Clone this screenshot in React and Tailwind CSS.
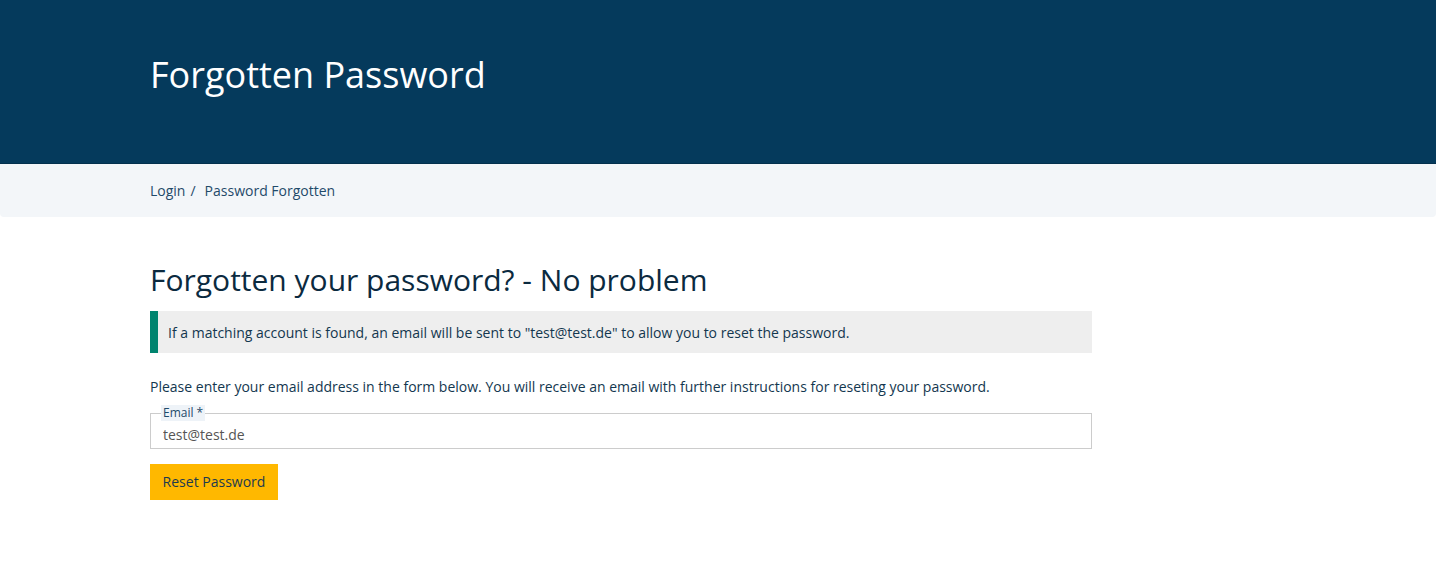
import React from "react";

function App() {
  return (
    <div className="min-h-[571px] bg-white font-['Open_Sans',sans-serif] text-[#13374f]">
      <header className="h-[164px] bg-[#053a5c] border-b border-[#03304d] flex items-center">
        <h1 className="pl-[150px] pb-[14px] text-[36px] leading-[44px] font-normal text-white">
          Forgotten Password
        </h1>
      </header>

      <nav className="h-[53px] bg-[#f3f6f9] rounded-b-[4px] flex items-center pl-[150px] text-[14px] text-[#1f4a6a]">
        <span>Login</span>
        <span className="ml-[5px] mr-[9px]">/</span>
        <span>Password Forgotten</span>
      </nav>

      <main className="pl-[150px] w-[1092px] pt-[45px]">
        <h2 className="text-[30px] leading-[36px] font-normal text-[#0b2a3f]">
          Forgotten your password? - No problem
        </h2>

        <div className="mt-[13px] h-[42px] bg-[#eeeeee] border-l-[8px] border-[#00846f] flex items-center pl-[10px] text-[14px] text-[#13374f]">
          If a matching account is found, an email will be sent to "test@test.de" to allow you to reset the password.
        </div>

        <p className="mt-[24px] text-[14px] leading-[20px] text-[#13374f]">
          Please enter your email address in the form below. You will receive an email with further instructions for reseting your password.
        </p>

        <fieldset className="mt-[8px] border border-[#cccccc] px-[12px] pb-[2px]">
          <legend className="px-[2px] -ml-[2px] bg-[#eef3f8] text-[12px] leading-[16px] text-[#1f4a6a]">
            Email *
          </legend>
          <input
            type="email"
            defaultValue="test@test.de"
            className="mt-[3px] w-full h-[20px] outline-none bg-transparent text-[14px] text-[#555555] font-['Open_Sans',sans-serif]"
          />
        </fieldset>

        <button className="mt-[15px] h-[36px] w-[128px] bg-[#ffb800] text-[14px] text-[#1d3a4f] font-['Open_Sans',sans-serif]">
          Reset Password
        </button>
      </main>
    </div>
  );
}

export default App;
